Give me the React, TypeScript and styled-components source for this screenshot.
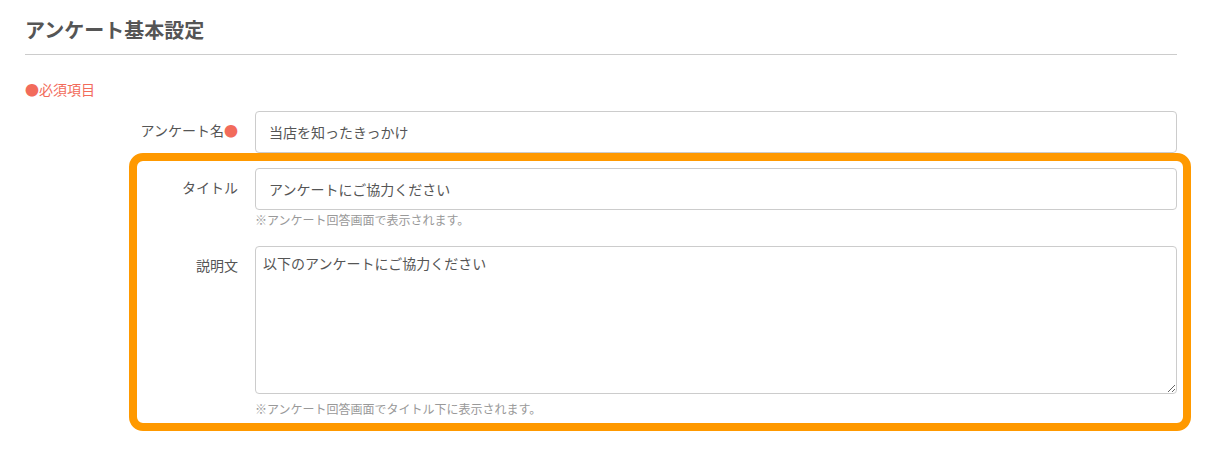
import React from "react";
import styled, { createGlobalStyle } from "styled-components";

const GlobalStyle = createGlobalStyle`
  body {
    margin: 0;
    background: #fff;
    font-family: "Noto Sans CJK JP", "Noto Sans", sans-serif;
    color: #555;
  }
  * { box-sizing: border-box; }
`;

const Page = styled.div`
  width: 1212px;
  padding: 16px 35px 0 25px;
`;

const Heading = styled.h2`
  margin: 0;
  padding-bottom: 11px;
  font-size: 20px;
  font-weight: 700;
  line-height: 27px;
  color: #555;
  border-bottom: 1px solid #ccc;
`;

const Required = styled.p`
  margin: 24px 0 12px;
  font-size: 14px;
  line-height: 20px;
  color: #f26b5b;
`;

const Dot = styled.span`
  color: #f26b5b;
`;

const Row = styled.div<{ labelWidth: number }>`
  display: grid;
  grid-template-columns: ${p => p.labelWidth}px 1fr;
  column-gap: 17px;
  align-items: start;
`;

const Label = styled.label`
  text-align: right;
  font-size: 14px;
  line-height: 20px;
  padding-top: 9px;
  color: #555;
`;

const Field = styled.div`
  display: flex;
  flex-direction: column;
`;

const TextInput = styled.input`
  height: 42px;
  width: 100%;
  padding: 0 13px;
  border: 1px solid #ccc;
  border-radius: 4px;
  font-family: inherit;
  font-size: 14px;
  color: #555;
  outline: none;
`;

const TextArea = styled.textarea`
  height: 148px;
  width: 100%;
  padding: 6px 7px;
  border: 1px solid #ccc;
  border-radius: 4px;
  font-family: inherit;
  font-size: 14px;
  line-height: 20px;
  color: #555;
  outline: none;
  resize: vertical;
`;

const Hint = styled.span<{ gap: number }>`
  font-size: 12px;
  line-height: 17px;
  color: #999;
  margin-top: ${p => p.gap}px;
`;

const Highlight = styled.div`
  margin: 0 -14px 0 104px;
  padding: 7px 6px 6px 0;
  border: 8px solid #ff9900;
  border-radius: 14px;
  display: flex;
  flex-direction: column;
  gap: 18px;
`;

export default function App() {
  return (
    <>
      <GlobalStyle />
      <Page>
        <Heading>アンケート基本設定</Heading>
        <Required>●必須項目</Required>
        <Row labelWidth={213}>
          <Label>
            アンケート名<Dot>●</Dot>
          </Label>
          <TextInput defaultValue="当店を知ったきっかけ" />
        </Row>
        <Highlight>
          <Row labelWidth={101}>
            <Label>タイトル</Label>
            <Field>
              <TextInput defaultValue="アンケートにご協力ください" />
              <Hint gap={1}>※アンケート回答画面で表示されます。</Hint>
            </Field>
          </Row>
          <Row labelWidth={101}>
            <Label>説明文</Label>
            <Field>
              <TextArea defaultValue="以下のアンケートにご協力ください" />
              <Hint gap={6}>※アンケート回答画面でタイトル下に表示されます。</Hint>
            </Field>
          </Row>
        </Highlight>
      </Page>
    </>
  );
}
